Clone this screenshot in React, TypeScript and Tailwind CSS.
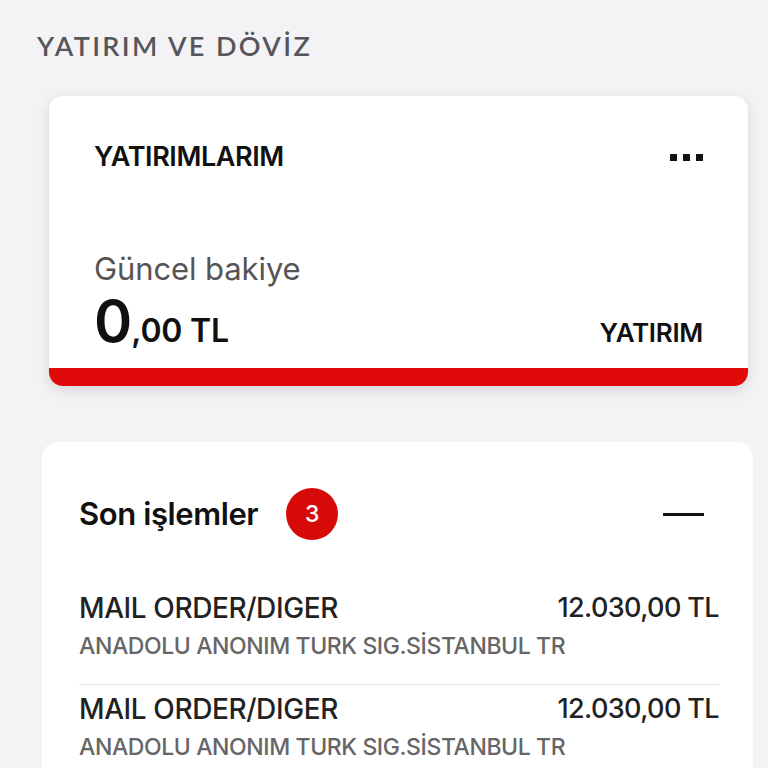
type Tx = { title: string; amount: string; merchant: string };

const transactions: Tx[] = [
  { title: 'MAIL ORDER/DIGER', amount: '12.030,00 TL', merchant: 'ANADOLU ANONIM TURK SIG.SİSTANBUL TR' },
  { title: 'MAIL ORDER/DIGER', amount: '12.030,00 TL', merchant: 'ANADOLU ANONIM TURK SIG.SİSTANBUL TR' },
];

function InvestmentCard() {
  return (
    <div className="ml-[49px] mr-[20px] mt-[34px] rounded-[14px] bg-white shadow-[0_4px_14px_rgba(0,0,0,0.12)] overflow-hidden">
      <div className="pl-[45px] pr-[45px] pt-[45px]">
        <div className="flex items-center justify-between h-[32px]">
          <span className="text-[27px] font-semibold tracking-[-0.4px] text-[#111] leading-[32px]">YATIRIMLARIM</span>
          <div className="flex gap-[6px]">
            <span className="w-[7px] h-[7px] bg-[#111]" />
            <span className="w-[7px] h-[7px] bg-[#111]" />
            <span className="w-[7px] h-[7px] bg-[#111]" />
          </div>
        </div>
        <div className="mt-[78px] text-[31px] text-[#555] leading-[36px] tracking-[-0.1px]">Güncel bakiye</div>
        <div className="mt-[5px] pb-[18px] flex items-baseline justify-between">
          <div className="flex items-baseline text-[#111]">
            <span className="text-[58px] font-semibold leading-none tracking-[-1px]">0</span>
            <span className="text-[32px] font-semibold leading-none tracking-[-0.2px]">,00 TL</span>
          </div>
          <span className="text-[26px] font-semibold text-[#111] leading-none tracking-[-0.3px]">YATIRIM</span>
        </div>
      </div>
      <div className="h-[18px] bg-[#e00a0a]" />
    </div>
  );
}

function RecentTransactions() {
  return (
    <div className="ml-[42px] mr-[15px] mt-[56px] rounded-t-[16px] bg-white pl-[37px] pr-[34px] pt-[46px] pb-[24px]">
      <div className="flex items-center justify-between h-[52px]">
        <div className="flex items-center gap-[28px]">
          <span className="text-[31px] font-semibold text-[#111] tracking-[-0.4px] leading-[36px]">Son işlemler</span>
          <span className="w-[52px] h-[52px] rounded-full bg-[#d70a0a] text-white text-[23px] font-medium flex items-center justify-center">3</span>
        </div>
        <span className="w-[41px] h-[3px] bg-[#111] mr-[15px]" />
      </div>
      <div className="mt-[52px]">
        {transactions.map((t, i) => (
          <div key={i} className={i > 0 ? 'border-t border-[#e3e3e3] pt-[8px]' : 'pb-[24px]'}>
            <div className="flex items-center justify-between h-[32px]">
              <span className="text-[28px] font-medium text-[#222] tracking-[-0.4px] leading-[32px]">{t.title}</span>
              <span className="text-[27px] font-medium text-[#222] tracking-[-0.6px] leading-[32px]">{t.amount}</span>
            </div>
            <div className="mt-[8px] text-[23px] font-medium text-[#666] tracking-[-0.4px] leading-[28px]">{t.merchant}</div>
          </div>
        ))}
      </div>
    </div>
  );
}

export default function App() {
  return (
    <div className="bg-[#f3f3f6] pt-[30px] overflow-hidden h-[768px]" style={{ fontFamily: 'Inter, "Noto Sans", sans-serif' }}>
      <h2 className="ml-[37px] text-[27px] font-semibold tracking-[2.4px] text-[#56565a] leading-[32px]" style={{ fontFamily: 'Lato, Inter, sans-serif' }}>
        YATIRIM VE DÖVİZ
      </h2>
      <InvestmentCard />
      <RecentTransactions />
    </div>
  );
}
